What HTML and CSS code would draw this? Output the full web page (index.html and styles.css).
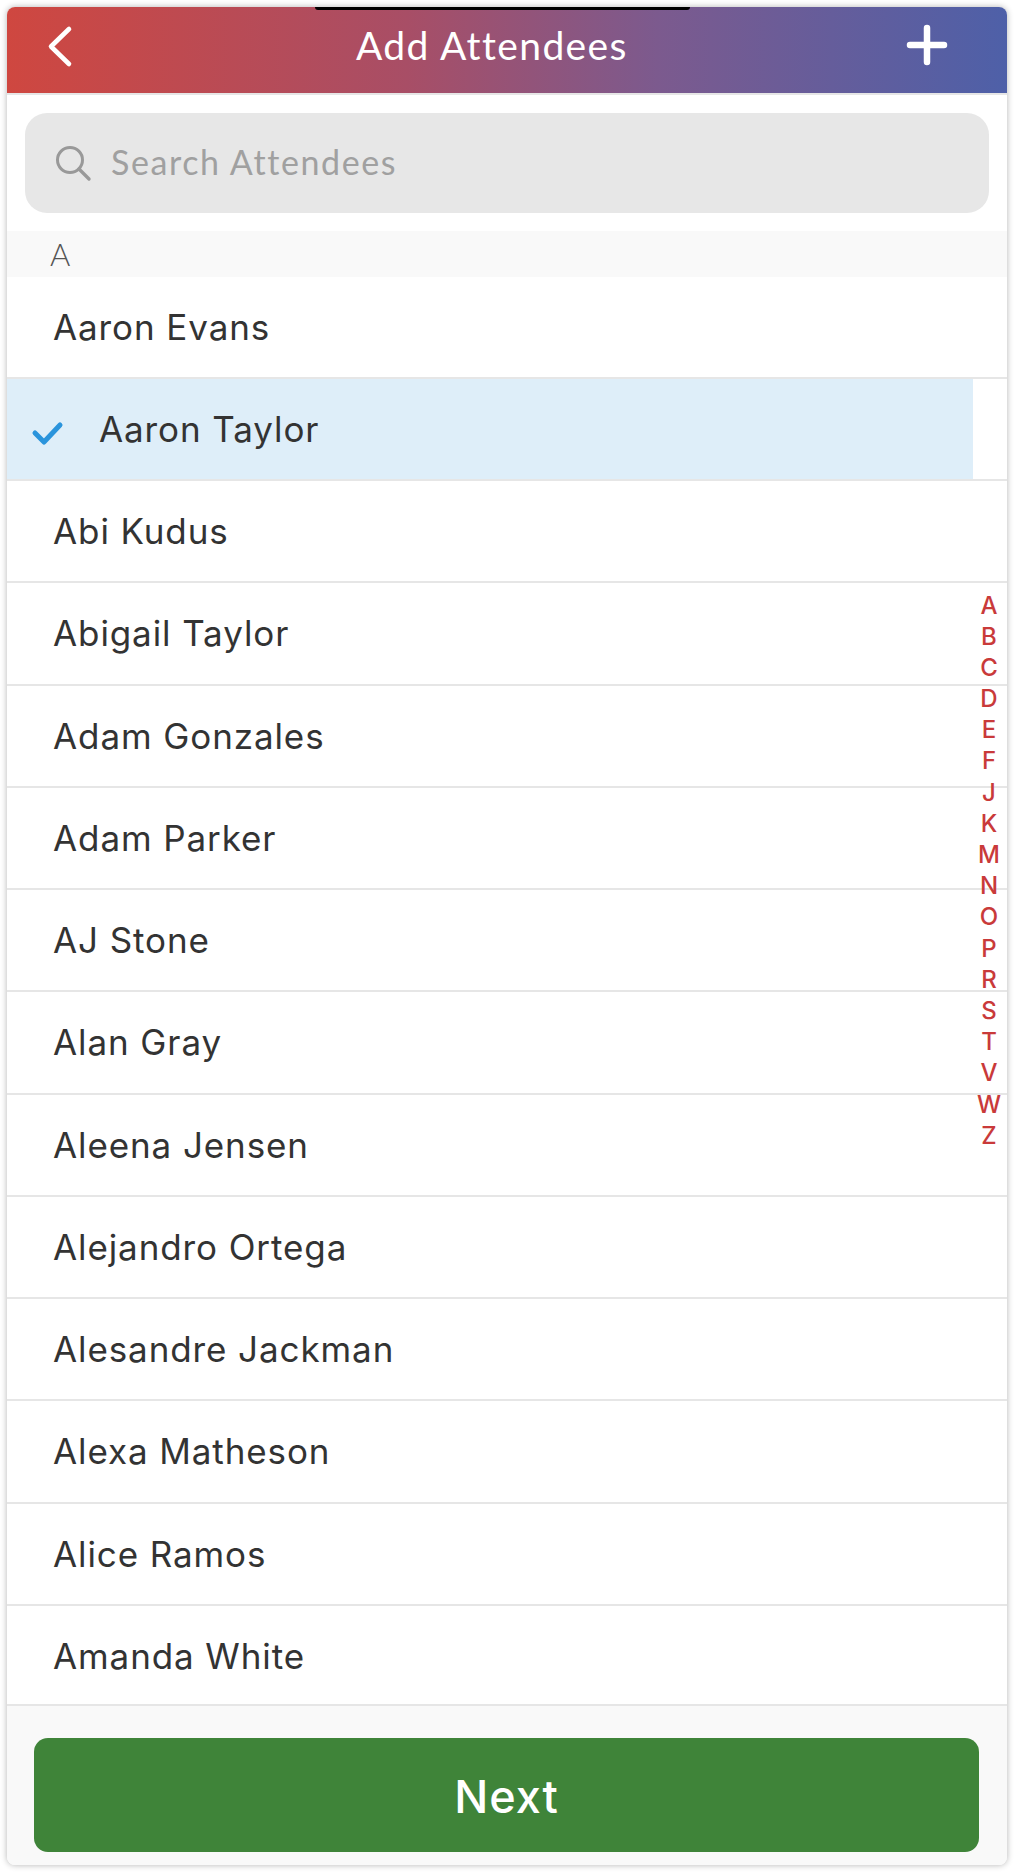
FILE: index.html
```html
<!DOCTYPE html>
<html lang="en">
<head>
    <meta charset="UTF-8">
    <title>Add Attendees</title>
    <link rel="stylesheet" href="styles.css">
</head>
<body>
    <div class="screen">
        <div class="notch"></div>
        <header class="top-bar">
            <svg class="back-icon" width="30" height="44" viewBox="0 0 30 44">
                <path d="M24 4 L6 21.5 L24 39" fill="none" stroke="#fff" stroke-width="4.6" stroke-linecap="round" stroke-linejoin="round"/>
            </svg>
            <h1>Add Attendees</h1>
            <svg class="add-icon" width="42" height="42" viewBox="0 0 42 42">
                <path d="M21 4 V38 M4 21 H38" fill="none" stroke="#fff" stroke-width="6.5" stroke-linecap="round"/>
            </svg>
        </header>

        <div class="search-wrap">
            <div class="search-box">
                <svg class="search-icon" width="38" height="38" viewBox="0 0 38 38">
                    <circle cx="15" cy="15" r="12.5" fill="none" stroke="#999" stroke-width="3"/>
                    <path d="M24 24 L34 34" fill="none" stroke="#999" stroke-width="3.4" stroke-linecap="round"/>
                </svg>
                <span class="search-text">Search Attendees</span>
            </div>
        </div>

        <div class="section-head">A</div>

        <div class="list-wrap">
            <ul class="people">
                <li>Aaron Evans</li>
                <li class="selected">
                    <svg class="check-icon" width="36" height="28" viewBox="0 0 36 28">
                        <path d="M4 14 L13 23 L29 6" fill="none" stroke="#2a94dc" stroke-width="5" stroke-linecap="round" stroke-linejoin="round"/>
                    </svg>
                    Aaron Taylor
                </li>
                <li>Abi Kudus</li>
                <li>Abigail Taylor</li>
                <li>Adam Gonzales</li>
                <li>Adam Parker</li>
                <li>AJ Stone</li>
                <li>Alan Gray</li>
                <li>Aleena Jensen</li>
                <li>Alejandro Ortega</li>
                <li>Alesandre Jackman</li>
                <li>Alexa Matheson</li>
                <li>Alice Ramos</li>
                <li>Amanda White</li>
            </ul>

            <div class="alpha-index">
                <span>A</span><span>B</span><span>C</span><span>D</span><span>E</span><span>F</span>
                <span>J</span><span>K</span><span>M</span><span>N</span><span>O</span><span>P</span>
                <span>R</span><span>S</span><span>T</span><span>V</span><span>W</span><span>Z</span>
            </div>
        </div>

        <footer class="bottom-bar">
            <button type="button">Next</button>
        </footer>
    </div>
</body>
</html>
```

FILE: styles.css
```css
html, body {
    margin: 0;
    padding: 0;
    height: 1873px;
    overflow: hidden;
}
body {
    background-color: #fff;
    font-family: 'Inter', 'Liberation Sans', sans-serif;
    color: #333;
    box-sizing: border-box;
    padding: 7px 8px 8px 7px;
}
.screen {
    position: relative;
    display: flex;
    flex-direction: column;
    height: 1858px;
    background-color: #fff;
    border-radius: 8px;
    overflow: hidden;
    box-shadow: 0 0 6px rgba(0, 0, 0, 0.3);
}
.notch {
    position: absolute;
    top: 0;
    left: 308px;
    width: 375px;
    height: 3px;
    background-color: #000;
    border-radius: 0 0 12px 12px;
}
.top-bar {
    display: flex;
    align-items: center;
    height: 86px;
    padding: 0 59px 0 38px;
    flex-shrink: 0;
    background: linear-gradient(to right, #cf4740, #a84e66 40%, #7c5a8e 65%, #4e60a8);
    border-bottom: 2px solid #e6e6e6;
}
.back-icon {
    margin-top: -6px;
}
.top-bar h1 {
    flex: 1;
    margin: -11px 0 0 281px;
    font-family: 'Lato', sans-serif;
    font-size: 39px;
    font-weight: 400;
    letter-spacing: 1.4px;
    color: #fff;
}
.add-icon {
    margin-top: -10px;
}
.search-wrap {
    padding: 18px;
    flex-shrink: 0;
}
.search-box {
    display: flex;
    align-items: center;
    height: 100px;
    padding-left: 30px;
    background-color: #e7e7e7;
    border-radius: 22px;
    font-family: 'Lato', sans-serif;
    font-size: 34px;
    letter-spacing: 1.6px;
    color: #a0a0a0;
}
.search-icon {
    margin: 1px 18px 0 0;
}
.search-text {
    margin-top: -4px;
}
.section-head {
    height: 45.5px;
    line-height: 47.5px;
    padding-left: 43px;
    flex-shrink: 0;
    background-color: #f9f9f9;
    font-family: 'Lato', sans-serif;
    font-size: 31px;
    font-weight: 300;
    color: #555;
}
.list-wrap {
    position: relative;
    flex: 1;
}
.people {
    list-style: none;
    margin: 0;
    padding: 0;
}
.people li {
    display: flex;
    align-items: center;
    box-sizing: border-box;
    height: 102.25px;
    padding-left: 46px;
    border-bottom: 2px solid #e6e6e6;
    font-size: 35px;
    letter-spacing: 0.9px;
}
.people li:last-child {
    height: 100px;
    padding-top: 2px;
}
.people li.selected {
    padding-left: 92px;
    position: relative;
    background: linear-gradient(to right, #deeef9 966px, #fff 966px);
}
.check-icon {
    position: absolute;
    left: 24px;
    top: 40px;
}
.alpha-index {
    position: absolute;
    top: 313px;
    right: 0;
    width: 36px;
    display: flex;
    flex-direction: column;
    align-items: center;
    font-size: 24px;
    font-weight: 500;
    letter-spacing: 0;
    color: #c93a3a;
}
.alpha-index span {
    height: 31.2px;
    line-height: 31.2px;
}
.bottom-bar {
    height: 159px;
    box-sizing: border-box;
    padding: 32px 28px 13px 27px;
    flex-shrink: 0;
    background-color: #f9f9f9;
}
.bottom-bar button {
    display: block;
    width: 100%;
    height: 114px;
    padding: 2px 0 0;
    border: none;
    border-radius: 14px;
    background-color: #3f8439;
    color: #fff;
    font-family: 'Inter', sans-serif;
    font-size: 45px;
    font-weight: 500;
    letter-spacing: 1px;
}
```
